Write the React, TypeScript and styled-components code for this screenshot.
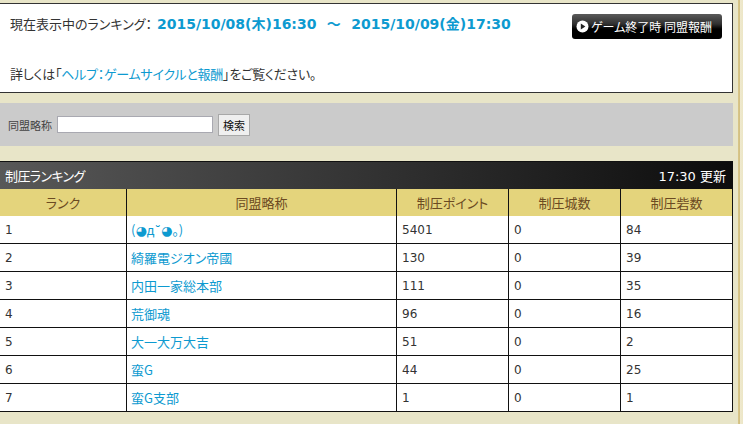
import React from 'react';
import styled, { createGlobalStyle } from 'styled-components';

const FONT = `"MS PGothic", "Noto Sans CJK JP", "DejaVu Sans", sans-serif`;
const LATIN = `"DejaVu Sans", "Noto Sans CJK JP", sans-serif`;

const rows = [
  { rank: 1, name: '(◕д˘◕。)', point: 5401, castle: 0, fort: 84 },
  { rank: 2, name: '綺羅電ジオン帝國', point: 130, castle: 0, fort: 39 },
  { rank: 3, name: '内田一家総本部', point: 111, castle: 0, fort: 35 },
  { rank: 4, name: '荒御魂', point: 96, castle: 0, fort: 16 },
  { rank: 5, name: '大一大万大吉', point: 51, castle: 0, fort: 2 },
  { rank: 6, name: '蛮G', point: 44, castle: 0, fort: 25 },
  { rank: 7, name: '蛮G支部', point: 1, castle: 0, fort: 1 },
];

const GlobalStyle = createGlobalStyle`
  html, body {
    margin: 0;
    padding: 0;
    background: #e8e5c8;
  }
`;

const Page = styled.div`
  width: 743px;
  height: 424px;
  overflow: hidden;
  display: flex;
  background: #e8e5c8;
  font-family: ${FONT};
  font-feature-settings: "palt";
  color: #333;
`;

const Main = styled.div`
  width: 733px;
  padding-top: 3px;
  display: flex;
  flex-direction: column;
  flex-shrink: 0;
`;

const SideRail = styled.div`
  margin-left: 5px;
  width: 5px;
  background: linear-gradient(90deg, #d8c68a 0, #d2bf80 2px, #efe9cf 2px, #ece6c6 100%);
`;

const InfoPanel = styled.div`
  height: 90px;
  box-sizing: border-box;
  background: #fff;
  border: 1px solid #333;
  border-left: none;
  padding: 10px 10px 0 10px;
  display: flex;
  flex-direction: column;
`;

const PeriodRow = styled.div`
  display: flex;
  justify-content: space-between;
  align-items: flex-start;
  height: 47px;
`;

const PeriodText = styled.div`
  font-size: 13px;
  line-height: 20px;
  white-space: nowrap;
`;

const PeriodDate = styled.span`
  font-family: ${LATIN};
  font-weight: bold;
  font-size: 14px;
  color: #0d9ad0;
  margin-left: 5px;
  word-spacing: 5.5px;
`;

const RewardButton = styled.a`
  width: 150px;
  height: 25px;
  box-sizing: border-box;
  border-radius: 3px;
  background: linear-gradient(180deg, #5a5a5a 0%, #303030 40%, #000 60%, #000 100%);
  color: #fff;
  font-size: 12px;
  display: flex;
  align-items: center;
  gap: 2px;
  padding-left: 4px;
  white-space: nowrap;
`;

const HelpText = styled.div`
  font-size: 13px;
  line-height: 20px;
  margin-top: 3px;
  letter-spacing: -0.25px;
`;

const HelpLink = styled.a`
  color: #0d9ad0;
`;

const SearchBar = styled.form`
  margin-top: 10px;
  height: 43px;
  background: #cbcbcb;
  display: flex;
  align-items: center;
  padding-left: 8px;
  font-size: 11px;
  color: #444;
`;

const SearchLabel = styled.label`
  width: 49px;
`;

const SearchInput = styled.input`
  width: 156px;
  height: 17px;
  box-sizing: border-box;
  border: 1px solid #a9a9b1;
  background: #fff;
  padding: 0;
  margin-right: 5px;
`;

const SearchButton = styled.button`
  width: 32px;
  height: 22px;
  box-sizing: border-box;
  border: 1px solid #a8a8a8;
  background: #efefef;
  padding: 0;
  font-family: ${FONT};
  font-size: 11px;
  color: #111;
`;

const TitleBar = styled.div`
  margin-top: 15px;
  height: 28px;
  box-sizing: border-box;
  border-top: 1px solid #111;
  background: linear-gradient(90deg, #585858 0%, #333 50%, #0c0c0c 100%);
  color: #fff;
  display: flex;
  justify-content: space-between;
  align-items: center;
  padding: 0 7px 0 5px;
  font-size: 13px;
`;

const TitleText = styled.span`
  letter-spacing: -0.6px;
`;

const UpdateTime = styled.span`
  font-family: ${LATIN};
  font-size: 13px;
`;

const Table = styled.table`
  width: 733px;
  table-layout: fixed;
  border-collapse: separate;
  border-spacing: 0;
  font-size: 13px;
`;

const HeadCell = styled.th`
  height: 27px;
  padding: 0;
  background: #e4d47c;
  color: #6b4a22;
  font-weight: normal;
  text-align: center;
  border-right: 1px solid #111;
`;

const Cell = styled.td`
  height: 26px;
  box-sizing: content-box;
  padding: 1px 0 0 5px;
  background: #fff;
  color: #333;
  font-family: ${LATIN};
  font-size: 12px;
  border-right: 1px solid #111;
  border-bottom: 1px solid #111;
`;

const NameCell = styled(Cell)`
  height: 27px;
  padding: 0 0 0 4px;
  font-family: ${FONT};
  font-size: 13px;
  font-feature-settings: "normal";
  color: #0d9ad0;
`;

const PlayIcon = () => (
  <svg width="13" height="13" viewBox="0 0 13 13">
    <circle cx="6.5" cy="6.5" r="6" fill="#fff" />
    <path d="M4.8 3.6 L9.4 6.5 L4.8 9.4 Z" fill="#222" />
  </svg>
);

export default function App() {
  return (
    <Page>
      <GlobalStyle />
      <Main>
        <InfoPanel>
          <PeriodRow>
            <PeriodText>
              現在表示中のランキング：
              <PeriodDate>2015/10/08(木)16:30 ～ 2015/10/09(金)17:30</PeriodDate>
            </PeriodText>
            <RewardButton>
              <PlayIcon />
              ゲーム終了時 同盟報酬
            </RewardButton>
          </PeriodRow>
          <HelpText>
            詳しくは「<HelpLink>ヘルプ：ゲームサイクルと報酬</HelpLink>」をご覧ください。
          </HelpText>
        </InfoPanel>
        <SearchBar>
          <SearchLabel>同盟略称</SearchLabel>
          <SearchInput />
          <SearchButton type="button">検索</SearchButton>
        </SearchBar>
        <TitleBar>
          <TitleText>制圧ランキング</TitleText>
          <UpdateTime>17:30 更新</UpdateTime>
        </TitleBar>
        <Table>
          <colgroup>
            <col width="127" />
            <col width="270" />
            <col width="112" />
            <col width="112" />
            <col width="112" />
          </colgroup>
          <thead>
            <tr>
              <HeadCell>ランク</HeadCell>
              <HeadCell>同盟略称</HeadCell>
              <HeadCell>制圧ポイント</HeadCell>
              <HeadCell>制圧城数</HeadCell>
              <HeadCell>制圧砦数</HeadCell>
            </tr>
          </thead>
          <tbody>
            {rows.map((r) => (
              <tr key={r.rank}>
                <Cell>{r.rank}</Cell>
                <NameCell>{r.name}</NameCell>
                <Cell>{r.point}</Cell>
                <Cell>{r.castle}</Cell>
                <Cell>{r.fort}</Cell>
              </tr>
            ))}
          </tbody>
        </Table>
      </Main>
      <SideRail />
    </Page>
  );
}
